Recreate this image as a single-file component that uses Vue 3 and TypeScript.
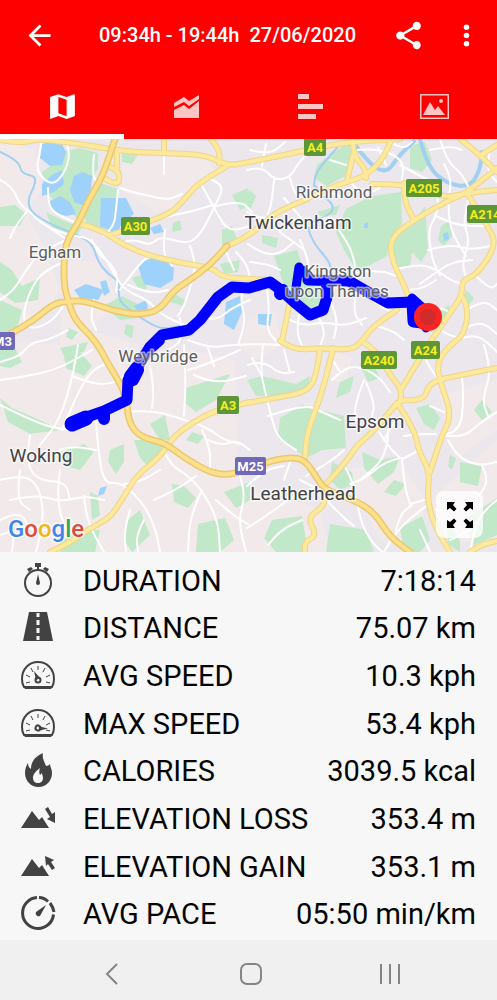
<script setup lang="ts">
import { ref } from 'vue'

interface Stat { icon: string; label: string; value: string }
interface Place { name: string; x: number; y: number; size: number; major?: boolean }
interface Shield { name: string; x: number; y: number; w: number; motorway?: boolean }

const activeTab = ref('map')
const tabs = [
  { id: 'map', label: 'Map' },
  { id: 'charts', label: 'Charts' },
  { id: 'splits', label: 'Splits' },
  { id: 'photos', label: 'Photos' },
]

const stats: Stat[] = [
  { icon: 'stopwatch', label: 'DURATION', value: '7:18:14' },
  { icon: 'road', label: 'DISTANCE', value: '75.07 km' },
  { icon: 'avg', label: 'AVG SPEED', value: '10.3 kph' },
  { icon: 'max', label: 'MAX SPEED', value: '53.4 kph' },
  { icon: 'fire', label: 'CALORIES', value: '3039.5 kcal' },
  { icon: 'loss', label: 'ELEVATION LOSS', value: '353.4 m' },
  { icon: 'gain', label: 'ELEVATION GAIN', value: '353.1 m' },
  { icon: 'pace', label: 'AVG PACE', value: '05:50 min/km' },
]

const places: Place[] = [
  { name: 'Richmond', x: 334, y: 198, size: 17 },
  { name: 'Twickenham', x: 298, y: 229, size: 19, major: true },
  { name: 'Egham', x: 55, y: 258, size: 17 },
  { name: 'Kingston', x: 338, y: 277, size: 17 },
  { name: 'upon Thames', x: 337, y: 297, size: 17 },
  { name: 'Weybridge', x: 158, y: 362, size: 17 },
  { name: 'Epsom', x: 375, y: 428, size: 19, major: true },
  { name: 'Woking', x: 41, y: 462, size: 19, major: true },
  { name: 'Leatherhead', x: 303, y: 500, size: 19, major: true },
]

const shields: Shield[] = [
  { name: 'A4', x: 304, y: 138, w: 22 },
  { name: 'A205', x: 406, y: 179, w: 36 },
  { name: 'A214', x: 467, y: 205, w: 36 },
  { name: 'A30', x: 121, y: 217, w: 29 },
  { name: 'M3', x: -10, y: 332, w: 25, motorway: true },
  { name: 'A240', x: 361, y: 351, w: 36 },
  { name: 'A24', x: 411, y: 341, w: 29 },
  { name: 'A3', x: 217, y: 396, w: 22 },
  { name: 'M25', x: 235, y: 457, w: 31, motorway: true },
]

const suburbs = [
  '0,139 35,150 42,190 26,212 45,250 60,290 40,320 0,330',
  '122,156 205,158 215,170 195,182 180,208 155,212 122,190',
  '64,260 100,262 118,300 90,330 140,345 120,380 60,345',
  '0,340 60,345 110,370 190,350 235,360 240,552 0,552',
  '250,320 275,310 282,345 255,360 238,345',
  '240,495 270,490 320,510 330,552 240,552',
  '345,470 400,460 425,500 420,552 380,540',
  '430,500 497,440 497,535 450,545',
  '440,395 497,380 497,430 455,460',
  '330,350 352,358 345,385 328,378',
]

const parks = [
  '60,152 80,148 98,153 98,168 90,184 86,205 78,218 60,204 44,192 42,172 52,165',
  '100,183 118,189 113,230 88,226 83,214',
  '46,212 62,220 82,228 76,236 52,228',
  '0,207 15,205 26,214 20,226 0,226',
  '0,262 12,270 22,286 40,278 38,300 15,303 0,292',
  '0,300 22,310 18,325 12,334 0,334',
  '0,350 14,346 22,362 10,368 0,366',
  '52,139 60,140 62,152 54,150',
  '122,150 138,154 132,164 122,162',
  '232,195 248,188 250,205 240,210',
  '222,230 232,226 238,242 222,246',
  '173,223 180,220 182,230 172,232',
  '132,278 150,272 146,290 138,288',
  '173,293 185,300 184,306 170,302',
  '103,306 122,296 150,310 138,318 120,320',
  '220,264 240,260 238,272 224,274',
  '126,324 134,326 132,338 124,334',
  '68,328 78,332 72,340 66,337',
  '317,165 344,145 353,146 345,176 327,186 314,178',
  '336,232 346,209 372,196 401,192 402,224 390,238 387,256 357,272 344,250',
  '394,240 414,222 425,206 428,250 421,262 412,252 410,266 394,268',
  '274,256 297,250 304,271 317,278 324,305 314,316 284,286',
  '262,235 278,238 276,248 262,243',
  '410,146 425,142 432,160 422,172 410,168',
  '441,226 450,220 452,236 444,246 438,240',
  '466,290 474,298 470,304 463,300',
  '440,310 450,305 446,320 436,324',
  '250,190 256,196 250,210 242,200',
  '318,212 340,205 336,215 320,216',
  '0,398 12,408 40,420 60,430 30,434 8,422',
  '66,450 84,444 94,452 80,470 66,466',
  '64,356 80,352 92,366 84,376 66,368',
  '60,348 88,342 84,352 64,356',
  '110,450 124,444 124,462 116,474 108,462',
  '134,440 146,440 165,447 158,458 148,466 140,458',
  '150,424 165,415 170,440 160,440',
  '185,388 230,374 216,400 196,412 186,404',
  '192,432 204,436 198,444 186,440',
  '172,484 184,486 196,498 188,508 174,502',
  '128,520 140,510 150,535 132,552 124,540',
  '198,524 225,518 234,540 220,552 196,552',
  '224,492 250,482 250,500 236,508',
  '60,541 80,530 100,530 95,552 60,552',
  '90,492 98,496 100,515 92,520',
  '280,418 302,405 344,416 346,448 322,450 306,458 278,438',
  '247,380 262,376 296,384 310,376 308,392 280,396 256,396',
  '272,520 302,516 308,552 276,552 264,538',
  '330,524 366,530 374,552 326,552',
  '332,462 352,472 354,484 340,490 330,480',
  '362,452 380,460 400,456 394,472 378,484 364,468',
  '340,382 354,376 350,392 336,398',
  '360,364 372,362 380,378 368,382',
  '416,408 430,404 440,418 434,430 424,424',
  '474,410 482,400 492,412 482,420',
  '460,462 482,466 478,486 460,482',
  '394,480 406,484 396,496 384,492',
  '400,528 422,516 430,540 420,552 404,552',
  '446,520 460,540 460,552 448,544',
  '464,520 497,498 497,535 474,545',
  '450,455 456,458 452,470 448,466',
]

const lakes = [
  '42,144 60,140 66,152 62,165 50,166 40,158',
  '52,175 62,170 64,184 54,192 42,196 42,184',
  '74,176 82,172 92,176 91,190 84,206 74,202 70,190',
  '48,202 60,196 70,202 76,214 66,216 54,212',
  '101,198 126,198 134,214 122,224 116,234 100,226',
  '138,266 146,258 166,260 174,268 173,280 160,288 144,284',
  '74,290 86,284 104,290 98,300 80,298',
  '100,282 106,280 110,292 104,296',
  '134,306 146,300 148,308 140,314',
  '226,302 240,296 242,312 234,330 224,324',
  '258,314 272,314 270,326 258,324',
  '150,228 160,224 164,232 154,234',
  '100,488 107,486 104,494 98,496',
  '443,234 448,232 449,239 444,241',
  '364,224 368,222 368,228 364,228',
]

const rivers = [
  '0,152 18,160 22,174 36,176 34,188 28,198 30,212 50,224 70,232 92,242 98,262 108,274 120,282 118,300 132,312 160,330 180,326',
  '315,186 324,196 335,207 328,216 306,224 314,244 330,262 332,275',
  '337,148 316,170 314,186',
]
const thames = [
  '356,146 370,165 387,173 397,158 414,141',
  '420,139 427,166 447,184 470,187 480,170 482,152',
]

const minorRoads = [
  '0,180 12,186 20,205 30,212 42,224 60,232 74,236 88,238 100,250 112,270 124,290 148,300 160,314 186,326',
  '42,139 40,152 36,172 52,186 64,174 70,156 66,140',
  '28,210 16,225 10,238', '68,240 40,222 28,210', '48,188 48,205 56,214 74,222',
  '120,188 132,192 150,196 168,200 182,194', '118,190 116,210 114,225 104,236',
  '164,153 164,174', '94,155 92,176 98,182', '66,240 40,252 26,270 14,290 0,300',
  '64,262 44,270 30,290 22,318 30,330 52,322 66,302', '92,240 98,255 110,262 118,276 116,292',
  '120,290 140,262 152,256', '128,285 150,294 168,290', '120,244 132,238 150,246 160,236 186,244 200,236 216,204 224,186 208,178',
  '200,182 214,208 228,232 250,226', '165,230 162,252 172,266', '190,246 196,262 192,282 184,306 178,316',
  '216,206 240,200 252,212', '236,252 246,262 250,278', '226,252 234,270', '150,222 168,216 190,212 216,204',
  '68,330 50,340 32,342 20,356 0,362', '0,380 30,376 60,368 92,350', '94,300 90,316 96,330', '72,376 92,384 112,384 128,374',
  '0,405 30,420 60,430 82,428', '78,345 74,372 60,420 40,445', '100,345 112,362 94,368 80,388 62,430',
  '96,420 98,450 104,484 122,482 144,504 156,530 160,552', '125,412 150,410 180,418 208,428 224,440 240,444',
  '184,345 186,380 184,416', '150,366 154,388 152,408', '60,450 72,446 96,450', '30,435 26,460 36,480 66,482 70,500',
  '0,480 24,474 40,488 44,520 36,552', '60,470 56,500 66,530', '10,500 36,494 60,502 84,496 104,500', '84,496 86,520 104,552',
  '0,520 20,510 30,530 46,530', '12,552 16,530 0,535', '20,470 16,500 30,510',
  '166,455 172,466 186,474 202,490 218,520 220,552', '202,490 190,515 188,552', '154,500 176,490 196,476',
  '124,484 140,482 160,470', '202,430 210,446 210,470', '208,440 222,446 236,440 250,450', '240,476 246,495 238,520 246,552',
  '130,510 124,530 126,552', '144,520 136,535 138,552', '216,500 234,516 248,524',
  '188,340 208,348 230,345 262,344 280,345', '188,370 208,364 240,350', '194,375 214,384 246,376', '200,316 214,322 232,308 250,300',
  '244,282 240,300 246,320 238,345', '180,318 184,340 168,350', '208,348 214,366', '266,283 270,306 266,330 280,345',
  '247,170 262,166 274,180 290,178 300,160 314,150', '262,166 266,144', '250,150 270,155 285,142', '274,180 272,202 268,214',
  '290,178 294,196 310,200', '247,212 260,220 280,214', '268,214 276,230 294,242 304,250', '248,244 262,254 280,254 294,242',
  '284,198 300,216 308,228 318,220 332,216 340,232 352,250 356,272', '250,262 268,264 280,270', '300,240 310,262 306,276',
  '310,200 328,192 340,196', '352,184 362,196 380,188', '330,160 346,165', '356,150 378,148 404,160 402,180', '378,148 386,165',
  '384,139 402,150 412,142', '426,178 440,196 436,216 428,230 432,260 440,275', '400,165 424,178', '444,164 452,178 448,200 450,230 466,256',
  '440,139 446,160 462,174 470,190', '430,150 450,146 462,150', '490,150 486,170 497,182', '470,195 462,220 470,240 462,262 466,278',
  '436,216 456,226 486,226', '428,250 450,244 470,250 490,246', '394,270 416,264 434,268 450,280 462,284', '420,284 432,275 452,262 472,260',
  '356,272 380,270 396,276', '357,290 352,310 362,325', '370,298 384,310 400,312', '330,300 338,318 334,338', '318,316 326,330 320,346',
  '290,320 304,326 322,322 346,326 366,318', '300,310 296,330 302,346', '376,326 392,330 404,340', '404,290 420,290 436,280',
  '425,326 436,306 450,312', '470,308 484,300 497,310', '466,328 480,320 497,334', '476,276 490,290 497,284', '440,330 456,340 478,334 497,352',
  '263,345 260,370 266,395 272,420 278,438 296,450', '248,365 262,360 280,374 294,372', '262,376 252,358', '284,350 290,372',
  '268,416 304,404 322,412 340,420', '332,380 346,366 364,368 380,378 390,392', '364,380 352,410 360,428', '366,382 376,405 370,418 388,446 400,458',
  '340,372 334,362', '384,440 394,420 404,418', '388,430 388,456 360,480', '400,458 384,462 366,478 350,484', '344,465 354,482 360,520 370,540 382,552',
  '402,458 404,484 410,504', '410,504 424,500', '384,552 396,530 426,506', '396,530 400,514 412,505',
  '436,434 418,434 404,436', '440,382 430,368 422,352', '462,376 464,400 460,430 440,436', '497,412 478,424 466,436 442,436', '484,345 492,370 482,400 488,416',
  '448,440 456,456 478,466 497,462', '416,452 404,458', '430,406 444,412', '482,466 490,480 476,500 456,512 436,510',
  '497,500 478,514 470,552', '247,528 268,515 290,498 314,488', '247,486 264,470 284,466', '306,476 330,462 344,450', '300,480 316,488', '268,545 280,530 302,520',
  '326,500 346,520 354,526', '290,462 284,480', '420,530 430,552', '470,530 450,540',
]

const mainRoads = [
  '0,140 17,143 37,140', '35,139 67,142 110,149 133,152 167,153 207,155 227,166 250,162 303,151 345,142 400,139',
  '227,166 200,182 187,196 173,212 150,221 133,228 110,235', '211,139 220,150 219,163', '164,139 164,153',
  '80,224 100,229 123,245 150,256 187,264 213,268 222,277 250,279 267,280',
  '104,178 118,187 120,172 108,166', '117,151 117,168',
  '227,246 250,236 274,213 303,201 330,188 347,182 367,175 382,160 392,139',
  '353,141 353,155 365,168 366,178', '353,155 347,181',
  '372,184 404,183 443,198 467,193 497,190', '404,183 404,201 414,220',
  '497,168 467,193 447,201 414,220 390,238 392,261 404,285 410,300',
  '467,193 487,225 497,244 477,275 462,280 462,296 448,316 435,335 420,358 402,388',
  '462,296 469,308 464,335 450,345 437,362 440,382 452,415 442,435 430,472',
  '460,139 480,155 497,172', '497,145 480,156',
  '290,301 282,341', '397,310 374,325 362,341 352,350 320,348 297,350 280,341', '362,341 376,350 390,375 402,390 400,402',
  '320,348 317,375 307,392 280,397 247,403', '333,348 324,388 307,432 305,458',
  '50,552 70,543 90,528 110,518 123,498 137,475 160,457 173,437 193,422 217,410 250,402',
  '325,485 344,465 357,445 375,430 397,403', '397,403 414,428 419,452 430,472 427,498 434,525 450,552',
  '400,400 424,402 429,382 460,375 497,368', '325,490 327,505 307,517 317,535 305,542 305,552', '470,552 480,545 497,541',
]
const motorways = [
  '115,139 108,161 100,181 88,201 80,220 67,240 64,258 64,285 68,301 75,320 90,335 100,348 107,362 120,383 127,400 128,418 135,432 147,439 165,443 183,457 207,471 223,475 237,473 267,462 290,457 305,460 317,478 325,490 354,500 374,512 390,537 410,552',
  '0,340 10,334 33,321 53,304 68,301 87,301 113,311 140,315 160,310 173,291 190,280 210,265 227,246',
]

/** Rounds the corners of a point list by running quadratic curves through segment midpoints. */
function smooth(points: string): string {
  const p = points.split(' ').map((pair) => pair.split(',').map(Number))
  let d = `M${p[0][0]} ${p[0][1]}`
  for (let i = 1; i < p.length - 1; i++) {
    const mx = (p[i][0] + p[i + 1][0]) / 2
    const my = (p[i][1] + p[i + 1][1]) / 2
    d += `Q${p[i][0]} ${p[i][1]} ${mx} ${my}`
  }
  const last = p[p.length - 1]
  return `${d}L${last[0]} ${last[1]}`
}

const minorPath = minorRoads.map(smooth).join('')
const mainPath = mainRoads.map(smooth).join('')
const motorwayPath = motorways.map(smooth).join('')
const riverPath = rivers.map(smooth).join('')
const thamesPath = thames.map(smooth).join('')
</script>

<template>
  <div class="screen">
    <header class="top">
      <div class="bar">
        <button class="icon-button" type="button" aria-label="Back">
          <svg class="action" viewBox="0 0 24 24"><path d="M20 11H7.83l5.59-5.59L12 4l-8 8 8 8 1.41-1.41L7.83 13H20z" /></svg>
        </button>
        <h1 class="title"><span>09:34h - 19:44h</span><span>27/06/2020</span></h1>
        <button class="icon-button" type="button" aria-label="Share">
          <svg class="action" viewBox="0 0 24 24"><path d="M18 16.08c-.76 0-1.44.3-1.96.77L8.91 12.7c.05-.23.09-.46.09-.7s-.04-.47-.09-.7l7.05-4.11c.54.5 1.25.81 2.04.81 1.66 0 3-1.34 3-3s-1.34-3-3-3-3 1.34-3 3c0 .24.04.47.09.7L8.04 9.81C7.5 9.31 6.79 9 6 9c-1.66 0-3 1.34-3 3s1.34 3 3 3c.79 0 1.5-.31 2.04-.81l7.12 4.16c-.05.21-.08.43-.08.65 0 1.61 1.31 2.92 2.92 2.92s2.92-1.31 2.92-2.92-1.31-2.92-2.92-2.92z" /></svg>
        </button>
        <button class="icon-button" type="button" aria-label="More options">
          <svg class="action" viewBox="0 0 24 24"><circle cx="12" cy="6" r="2" /><circle cx="12" cy="12" r="2" /><circle cx="12" cy="18" r="2" /></svg>
        </button>
      </div>
      <nav class="tabs" aria-label="Activity views">
        <button
          v-for="tab in tabs"
          :key="tab.id"
          type="button"
          class="tab"
          :class="{ active: activeTab === tab.id }"
          :aria-label="tab.label"
          :aria-pressed="activeTab === tab.id"
          @click="activeTab = tab.id"
        >
          <svg v-if="tab.id === 'map'" class="action" viewBox="0 0 24 24"><path d="M20.500 3l-.16.03L15 5.100 9 3 3.360 4.900c-.21.07-.36.25-.36.48V20.500c0 .28.22.5.5.5l.16-.03L9 18.900l6 2.100 5.640-1.900c.21-.07.36-.25.36-.48V3.500c0-.28-.22-.5-.5-.5zM15 19l-6-2.110V5l6 2.110V19z" /></svg>
          <svg v-else-if="tab.id === 'charts'" class="action" viewBox="0 0 33 33"><path d="M4 13l10-6 5 4 10-6v4l-10 7-5-4-10 5zM4 20l10-5 5 4 10-8v17H4z" /></svg>
          <svg v-else-if="tab.id === 'splits'" class="action" viewBox="0 0 33 33"><path d="M4 4h11v5H4zM4 14h25v5H4zM4 24h18v5H4z" /></svg>
          <svg v-else class="action" viewBox="0 0 33 33"><path fill-rule="evenodd" d="M2 4h29v25H2zM3.500 5.500v22h26v-22zM5 25l7-13 5 8 3-4 7 9z" /><circle cx="23" cy="11" r="2" /></svg>
        </button>
      </nav>
    </header>

    <main class="content">
      <section class="map" aria-label="Route map">
        <svg class="map-art" viewBox="0 139 497 413" preserveAspectRatio="xMidYMid slice">
          <rect x="0" y="139" width="497" height="413" fill="#ebe7ec" />
          <polygon v-for="s in suburbs" :key="s" :points="s" fill="#f2eaea" />
          <polygon v-for="s in parks" :key="s" :points="s" fill="#c1e8c9" />
          <polygon v-for="s in lakes" :key="s" :points="s" fill="#9fd2fa" />
          <g class="lines">
            <path :d="riverPath" stroke="#a3cff0" stroke-width="2" />
            <path :d="thamesPath" stroke="#a3cff0" stroke-width="4" />
            <path :d="minorPath" stroke="#fff" stroke-width="2" />
            <path :d="mainPath" stroke="#eed58a" stroke-width="6" />
            <path :d="mainPath" stroke="#fde99b" stroke-width="4" />
            <path :d="motorwayPath" stroke="#ebc870" stroke-width="7" />
            <path :d="motorwayPath" stroke="#fce08a" stroke-width="4" />
          </g>
          <g class="route">
            <path d="M72 424L86 418" stroke-width="15" />
            <path d="M84 418L104 411L127 400L128 380L138 366L150 347L162 335L189 330L200 320L218 297L232 287L249 288L270 282L281 290L294 302L310 315L323 310L328 294L326 282M308 280L349 281L368 292L388 303L412 302" stroke-width="11" />
            <path d="M104 413V419M130 376L136 368M133 380L138 370M150 348L159 340M283 290L280 294" stroke-width="12" />
            <path d="M299 267L295 294M303 270L309 280M412 298L422 307M425 324L426 328" stroke-width="9" />
            <path d="M413 302L414 321L422 322" stroke-width="13" />
          </g>
          <circle cx="428" cy="317" r="14" fill="#f92525" />
          <circle cx="428" cy="317" r="8" fill="#d12c2c" />
          <g v-for="s in shields" :key="s.name">
            <rect :x="s.x" :y="s.y" :width="s.w" height="18" rx="2" :fill="s.motorway ? '#7068b8' : '#5c9636'" />
            <text class="shield" :x="s.x + s.w / 2" :y="s.y + 14" :fill="s.motorway ? '#ffffff' : '#f6ee22'">{{ s.name }}</text>
          </g>
          <text v-for="p in places" :key="p.name" class="place" :class="{ major: p.major }" :x="p.x" :y="p.y" :font-size="p.size">{{ p.name }}</text>
          <text class="google" x="8" y="537"><tspan fill="#4285e8">G</tspan><tspan fill="#df4a3e">o</tspan><tspan fill="#efb51c">o</tspan><tspan fill="#4285e8">g</tspan><tspan fill="#3ba456">l</tspan><tspan fill="#df4a3e">e</tspan></text>
        </svg>
        <button class="expand" type="button" aria-label="Full screen map">
          <svg viewBox="0 0 26 26" width="26" height="26">
            <g v-for="a in [0, 90, 180, 270]" :key="a" :transform="`rotate(${a} 13 13)`">
              <path d="M0 0H8L6 3L9.500 7L7 9.500L3 6L0 8z" />
            </g>
          </svg>
        </button>
      </section>

      <table class="stats">
        <colgroup>
          <col class="symbol-column" />
          <col class="label-column" />
          <col />
        </colgroup>
        <tbody>
          <tr v-for="s in stats" :key="s.label">
            <td class="symbol">
              <svg viewBox="0 0 36 36" width="36" height="36" aria-hidden="true">
                <g v-if="s.icon === 'stopwatch'">
                  <circle cx="18" cy="20" r="13" class="stroke" />
                  <path d="M15 0h6v4h-2v3h-2V4h-2zM7 6l4-2 2 2-4 3zM29 6l-4-2-2 2 4 3zM18 11l2 9a2 2 0 0 1-4 0z" />
                </g>
                <g v-else-if="s.icon === 'road'">
                  <path fill-rule="evenodd" d="M9 2h18l6 29H3zM16.500 3v4h3V3zM16.500 10v5h3v-5zM16.500 18v5h3v-5zM16.500 26v4h3v-4z" />
                </g>
                <g v-else-if="s.icon === 'avg' || s.icon === 'max'">
                  <path class="stroke" d="M4 29C2 26 2 23 2 21C2 11 9 4 18 4s16 7 16 17c0 2 0 5-2 8z" />
                  <path d="M3 28h30l-2 3H5z" />
                  <path class="tick" d="M18 8v4M11 10l2 4M25 10l-2 4M6 17l4 2M30 17l-4 2M6 25l4-1M30 25l-4-1" />
                  <g :transform="s.icon === 'max' ? 'rotate(117 18 22)' : undefined">
                    <circle cx="18" cy="22" r="2.500" class="tick needle" />
                    <path d="M14 13l6 7-4 2z" />
                  </g>
                </g>
                <path
                  v-else-if="s.icon === 'fire'"
                  fill-rule="evenodd"
                  d="M23 0C22 5 24 8 26 13C28 13 29 12 30 11C30 14 32 16 32 20C32 28 26 34 18.500 34S5 28 5 20C5 16 6 13 8 10C8 13 9 15 11 16C11 8 16 3 23 0zM20 15C16 18 13 21 13 25C13 28 15 30 18 30S23 28 23 25C23 23 22 22 22 20L20 22C19 20 19 18 20 15z"
                />
                <g v-else-if="s.icon === 'loss' || s.icon === 'gain'">
                  <path d="M1 27L12 10l7 9 3-3 7 11z" />
                  <path v-if="s.icon === 'loss'" d="M25 8l3-2 4 7 3-2v11l-8-4 3-2z" />
                  <path v-else d="M25 7l9 4-3 2 4 6-3 2-4-6-2 2z" />
                </g>
                <g v-else>
                  <path class="dial" d="M17 1.500a15.500 15.500 0 1 0 16.500 17M19 1.500q5 0 9 4M30 7q3 4 4 9" />
                  <path d="M26 9l-6 11a3 3 0 0 1-4-4z" />
                </g>
              </svg>
            </td>
            <th scope="row">{{ s.label }}</th>
            <td class="value">{{ s.value }}</td>
          </tr>
        </tbody>
      </table>
    </main>

    <nav class="system" aria-label="System navigation">
      <button type="button" aria-label="Previous screen"><svg viewBox="0 0 24 24"><path d="M17 2L7 12l10 10" /></svg></button>
      <button type="button" aria-label="Home"><svg viewBox="0 0 24 24"><rect x="2" y="2" width="20" height="20" rx="6" /></svg></button>
      <button type="button" aria-label="Recent apps"><svg viewBox="0 0 24 24"><path d="M3 2v20M12 2v20M21 2v20" /></svg></button>
    </nav>
  </div>
</template>

<style>
body {
  margin: 0;
}
</style>

<style scoped>
.screen {
  display: flex;
  flex-direction: column;
  min-height: 100vh;
  background: #f7f7f7;
  color: #050505;
  font-family: Roboto, "Liberation Sans", sans-serif;
}
button {
  display: flex;
  align-items: center;
  justify-content: center;
  padding: 0;
  border: 0;
  background: none;
  color: inherit;
}
svg {
  display: block;
  fill: currentColor;
}
.top {
  background: #fe0000;
  color: #fff;
}
.bar {
  display: flex;
  align-items: center;
  height: 70px;
  padding: 0 10px 0 18px;
}
.icon-button {
  width: 42px;
  height: 42px;
}
.icon-button + .icon-button {
  margin-left: 16px;
}
.action {
  width: 33px;
  height: 33px;
}
.title {
  display: flex;
  flex: 1;
  gap: 10px;
  margin: 0 0 0 39px;
  font-size: 20px;
  font-weight: 500;
  white-space: nowrap;
}
.tabs {
  display: grid;
  grid-template-columns: repeat(4, 1fr);
}
.tab {
  height: 69px;
  padding-top: 8px;
  border-bottom: 5px solid transparent;
  color: #ffc4c4;
}
.tab.active {
  border-bottom-color: #fff;
  color: #fff;
}
.content {
  display: flex;
  flex: 1;
  flex-direction: column;
}
.map {
  position: relative;
}
.map-art {
  width: 100%;
}
.lines path,
.route path {
  fill: none;
  stroke-linecap: round;
  stroke-linejoin: round;
}
.route {
  stroke: #0000fe;
}
.place {
  fill: #5c5d61;
  stroke: rgba(255, 255, 255, 0.6);
  stroke-width: 3px;
  stroke-linejoin: round;
  paint-order: stroke;
  text-anchor: middle;
}
.place.major {
  fill: #424347;
}
.shield {
  font-size: 13px;
  font-weight: 700;
  text-anchor: middle;
}
.google {
  font-size: 24px;
  font-weight: 500;
  stroke: rgba(255, 255, 255, 0.7);
  stroke-width: 3px;
  paint-order: stroke;
}
.expand {
  position: absolute;
  right: 14px;
  bottom: 14px;
  width: 47px;
  height: 47px;
  border-radius: 8px;
  background: rgba(255, 255, 255, 0.75);
  color: #000;
}
.stats {
  flex: 1;
  width: 100%;
  padding: 5px 21px 2px 20px;
  border-spacing: 0;
  table-layout: fixed;
  font-size: 29px;
  line-height: 34px;
}
.symbol-column {
  width: 63px;
}
.label-column {
  width: 43%;
}
.stats td,
.stats th {
  padding: 0;
  font-weight: 400;
  text-align: left;
  vertical-align: middle;
  white-space: nowrap;
}
.stats .symbol {
  color: #424242;
}
.stats .value {
  text-align: right;
}
.stroke {
  fill: none;
  stroke: currentColor;
  stroke-width: 2;
}
.dial {
  fill: none;
  stroke: currentColor;
  stroke-width: 3;
}
.tick {
  fill: none;
  stroke: currentColor;
  stroke-width: 1;
}
.needle {
  stroke-width: 2;
}
.system {
  display: flex;
  align-items: center;
  justify-content: space-between;
  height: 60px;
  padding: 0 87px 0 92px;
  background: #f0f0f0;
  color: #858585;
}
.system button {
  width: 40px;
  height: 60px;
  padding-top: 8px;
}
.system svg {
  width: 24px;
  height: 24px;
  fill: none;
  stroke: currentColor;
  stroke-width: 2;
}
</style>
